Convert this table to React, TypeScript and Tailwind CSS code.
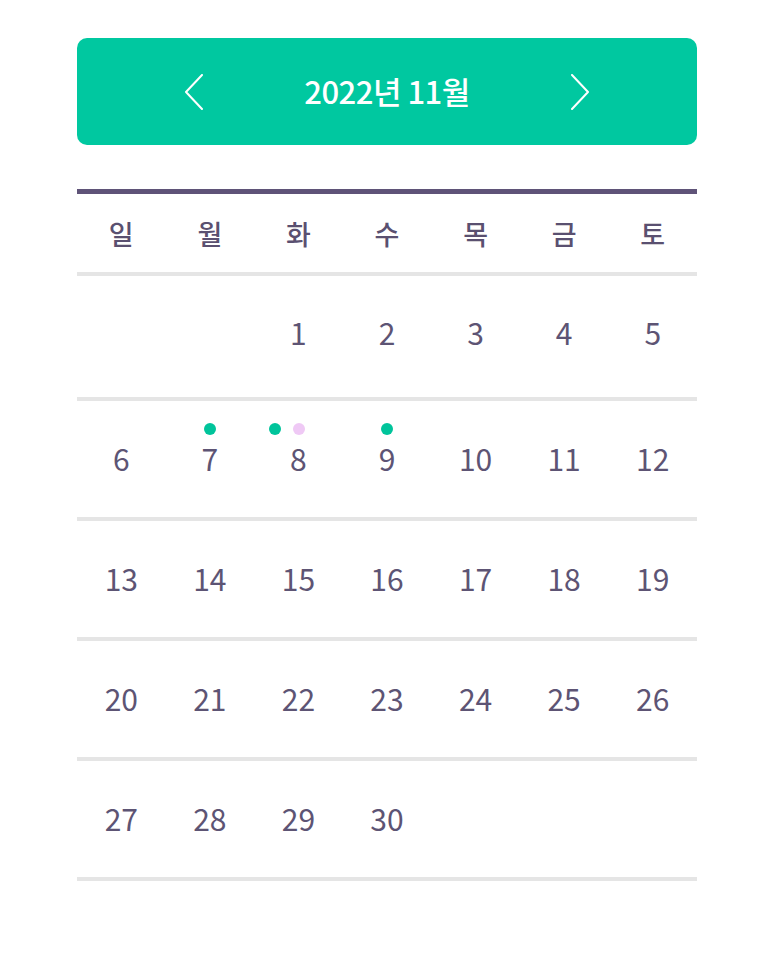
type Day = { n: number | null; dots?: string[] };

const weekdays = ["일", "월", "화", "수", "목", "금", "토"];

const dotColor: Record<string, string> = {
  green: "bg-[#00c49b]",
  pink: "bg-[#efc9f5]",
};

function buildWeeks(): Day[][] {
  const days: Day[] = [null, null].map(() => ({ n: null }));
  for (let i = 1; i <= 30; i++) {
    const d: Day = { n: i };
    if (i === 7 || i === 9) d.dots = ["green"];
    if (i === 8) d.dots = ["green", "pink"];
    days.push(d);
  }
  while (days.length % 7) days.push({ n: null });
  const weeks: Day[][] = [];
  for (let i = 0; i < days.length; i += 7) weeks.push(days.slice(i, i + 7));
  return weeks;
}

function Chevron({ dir }: { dir: "left" | "right" }) {
  return (
    <svg width="20" height="36" viewBox="0 0 20 36" fill="none" stroke="currentColor" strokeWidth="2" strokeLinecap="round" strokeLinejoin="round">
      {dir === "left" ? <polyline points="18,1 2,18 18,35" /> : <polyline points="2,1 18,18 2,35" />}
    </svg>
  );
}

export default function App() {
  const weeks = buildWeeks();

  return (
    <div
      className="min-h-screen bg-white"
      style={{ fontFamily: '"Noto Sans CJK KR", "Noto Sans", sans-serif' }}
    >
      <div className="w-[620px] ml-[77px] pt-[38px]">
        <div className="h-[107px] rounded-[10px] bg-[#00c8a0] flex items-center justify-center text-white">
          <button className="w-[20px] flex justify-center">
            <Chevron dir="left" />
          </button>
          <div className="w-[366px] text-center text-[31px] font-medium tracking-[-0.5px] leading-none pb-[2px]">
            2022년 11월
          </div>
          <button className="w-[20px] flex justify-center">
            <Chevron dir="right" />
          </button>
        </div>

        <div className="mt-[44px] border-t-[5px] border-[#5f5378]">
          <div className="grid grid-cols-7 h-[82px] items-center border-b-4 border-[#e5e5e5]">
            {weekdays.map((w) => (
              <div key={w} className="text-center text-[27px] font-medium text-[#5a5070] leading-none">
                {w}
              </div>
            ))}
          </div>

          {weeks.map((week, wi) => (
            <div
              key={wi}
              className={`grid grid-cols-7 border-b-4 border-[#e5e5e5] ${wi === 0 ? "h-[125px] pb-[10px]" : "h-[120px] pb-[2px]"}`}
            >
              {week.map((d, di) => (
                <div key={di} className="relative flex items-center justify-center">
                  {d.dots && (
                    <div
                      className={`absolute top-[22px] left-0 right-0 flex justify-center gap-3 ${d.dots.length > 1 ? "pr-[23px]" : ""}`}
                    >
                      {d.dots.map((c, ci) => (
                        <span key={ci} className={`w-[12px] h-[12px] rounded-full ${dotColor[c]}`} />
                      ))}
                    </div>
                  )}
                  {d.n !== null && (
                    <span className="text-[30px] text-[#5d5474] leading-none">{d.n}</span>
                  )}
                </div>
              ))}
            </div>
          ))}
        </div>
      </div>
    </div>
  );
}
